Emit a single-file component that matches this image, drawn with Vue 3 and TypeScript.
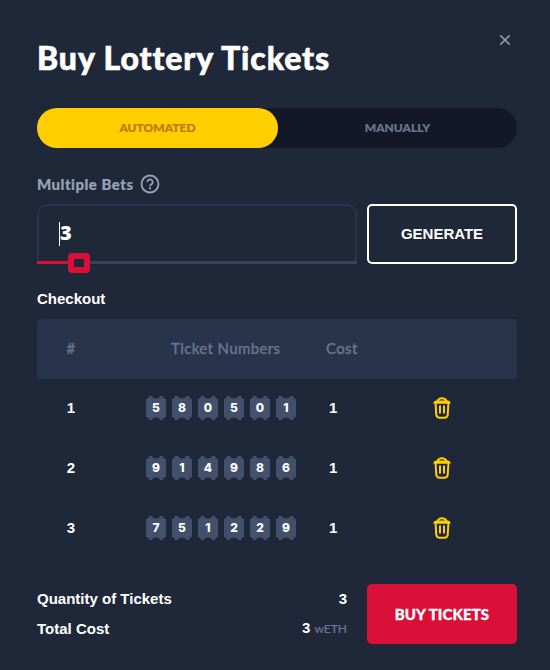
<script setup lang="ts">
import { ref } from 'vue'

interface Ticket {
  id: number
  numbers: number[]
  cost: number
}

const mode = ref<'automated' | 'manually'>('automated')
const bets = ref(3)
const tickets = ref<Ticket[]>([
  { id: 1, numbers: [5, 8, 0, 5, 0, 1], cost: 1 },
  { id: 2, numbers: [9, 1, 4, 9, 8, 6], cost: 1 },
  { id: 3, numbers: [7, 5, 1, 2, 2, 9], cost: 1 },
])
</script>

<template>
  <main class="modal">
    <header class="head">
      <h1 class="title">Buy Lottery Tickets</h1>
      <button class="close" aria-label="Close">
        <svg width="12" height="12" viewBox="0 0 12 12"><path d="M1.300 1.300l9.400 9.400M10.700 1.300l-9.400 9.400" stroke="#8d95a4" stroke-width="1.700" fill="none" /></svg>
      </button>
    </header>

    <div class="tabs">
      <button class="tab" :class="{ active: mode === 'automated' }" @click="mode = 'automated'"><span>AUTOMATED</span></button>
      <button class="tab" :class="{ active: mode === 'manually' }" @click="mode = 'manually'"><span>MANUALLY</span></button>
    </div>

    <div class="label">
      <span class="label-text">Multiple Bets</span>
      <svg width="20" height="20" viewBox="0 0 20 20" fill="none" stroke="#98a2b5">
        <circle cx="10" cy="10" r="8.500" stroke-width="1.800" />
        <path d="M7.400 8.100a2.650 2.650 0 1 1 4.100 2.200c-.95.6-1.500 1-1.500 1.900" stroke-width="1.800" />
        <path d="M9 14.300h2" stroke-width="2" />
      </svg>
    </div>

    <div class="bet-row">
      <div class="field">
        <span class="caret"></span><span class="value">{{ bets }}</span>
        <div class="track"><div class="fill"></div></div>
        <div class="thumb"></div>
      </div>
      <button class="generate"><span>GENERATE</span></button>
    </div>

    <h2 class="checkout">Checkout</h2>

    <section class="table">
      <div class="row thead">
        <span class="c-id">#</span>
        <span class="c-num">Ticket Numbers</span>
        <span class="c-cost">Cost</span>
        <span></span>
      </div>
      <div v-for="t in tickets" :key="t.id" class="row ticket">
        <span class="c-id">{{ t.id }}</span>
        <span class="c-num numbers">
          <span v-for="(n, i) in t.numbers" :key="i" class="stub">
            <svg class="stub-bg" width="20" height="24" viewBox="0 0 20 24"><path d="M3 0H6C6.500 1.700 8 2.500 10 2.500S13.500 1.700 14 0H17C17.300 1.700 18.300 2.700 20 3V21C18.300 21.300 17.300 22.300 17 24H14C13.500 22.300 12 21.500 10 21.500S6.500 22.300 6 24H3C2.700 22.300 1.700 21.300 0 21V3C1.700 2.700 2.700 1.700 3 0Z" fill="#42506b" /></svg>
            <b>{{ n }}</b>
          </span>
        </span>
        <span class="c-cost">{{ t.cost }}</span>
        <button class="trash" aria-label="Delete">
          <svg width="18" height="22" viewBox="0 0 18 22" fill="none" stroke="#ffcf00" stroke-linejoin="round">
            <path d="M4.400 4.300C5.200 2 6.400 1.300 9 1.300S12.800 2 13.600 4.300" stroke-width="1.900" />
            <path d="M1.300 6C1.300 4.800 2.200 4.300 3.700 4.300H14.300C15.800 4.300 16.700 4.800 16.700 6Z" stroke-width="1.700" />
            <path d="M2.600 6L3.200 17.300C3.350 19.700 4.500 20.800 6.700 20.800H11.300C13.500 20.800 14.650 19.700 14.800 17.300L15.400 6" stroke-width="2" />
            <path d="M7 8.500V16.500M11 8.500V16.500" stroke-width="2" />
          </svg>
        </button>
      </div>
    </section>

    <footer class="foot">
      <div class="totals">
        <div class="line"><span>Quantity of Tickets</span><span>{{ tickets.length }}</span></div>
        <div class="line"><span>Total Cost</span><span class="amount">3 <small>wETH</small></span></div>
      </div>
      <button class="buy"><span>BUY TICKETS</span></button>
    </footer>
  </main>
</template>

<style>
body { background: #1f2838; }
</style>

<style scoped>
* { box-sizing: border-box; }
.modal { width: 550px; height: 670px; padding: 28px 33px 0 37px; background: #1f2838; color: #fff; font: 700 15px "Liberation Sans", Arial, sans-serif; overflow: hidden; }
button { border: 0; padding: 0; margin: 0; background: none; font: inherit; color: inherit; display: flex; align-items: center; justify-content: center; }
.head { display: flex; justify-content: space-between; height: 80px; }
.title { margin: 0; font: 900 32px/60px Lato, sans-serif; letter-spacing: 0.9px; -webkit-text-stroke: 0.6px #fff; white-space: nowrap; }
.close { width: 24px; height: 24px; }
.tabs { width: 480px; height: 40px; border-radius: 20px; background: #121827; display: flex; }
.tab { width: 239px; height: 40px; padding-bottom: 2px; border-radius: 20px; color: #6b768d; font: 900 12px Lato, sans-serif; -webkit-text-stroke: 0.2px; }
.tab:first-child { width: 241px; }
.tab.active { background: #ffcf00; color: #c57600; }
.label { display: flex; align-items: center; height: 20px; margin-top: 26px; gap: 6px; color: #98a2b5; font: 900 15px/20px Lato, sans-serif; }
.label-text { width: 97px; letter-spacing: 0.5px; -webkit-text-stroke: 0.2px; white-space: nowrap; }
.bet-row { display: flex; gap: 10px; margin-top: 10px; width: 480px; }
.field { position: relative; width: 320px; height: 60px; border: 2px solid #28344b; border-bottom: 0; border-radius: 10px 10px 0 0; padding: 0 0 2px 20px; display: flex; align-items: center; }
.caret { width: 1px; height: 24px; background: #fff; }
.value { font: 800 20px/24px "Open Sans", sans-serif; padding-bottom: 2px; }
.track { position: absolute; left: -2px; right: -2px; bottom: 0; height: 3px; background: #37435a; }
.fill { width: 31px; height: 3px; background: #da1039; }
.thumb { position: absolute; left: 29px; top: 47px; width: 22px; height: 20px; border: 6px solid #da1039; border-radius: 4px; background: #1f2838; }
.generate { width: 150px; height: 60px; padding-bottom: 2px; border: 2px solid #fff; border-radius: 5px; }
.checkout { margin: 25px 0 0; height: 30px; font: inherit; line-height: 20px; }
.table { width: 480px; }
.row { display: grid; grid-template-columns: 68px 221px 79px 112px; align-items: center; height: 60px; }
.ticket { padding-bottom: 3px; }
.thead { background: #28344b; border-radius: 4px; color: #68758f; font: 500 15px Lato, sans-serif; letter-spacing: 0.35px; -webkit-text-stroke: 0.3px; padding-bottom: 2px; }
.c-id { text-align: center; }
.c-num { padding-left: 41px; white-space: nowrap; }
.thead .c-num { padding-left: 66px; }
.c-cost { padding-left: 3px; }
.thead .c-cost { padding-left: 0; }
.numbers { display: flex; gap: 6px; }
.stub { position: relative; width: 20px; height: 24px; display: flex; align-items: center; justify-content: center; font: 800 12px/24px Inter, sans-serif; }
.stub-bg { position: absolute; inset: 0; }
.stub b { position: relative; font-weight: 800; }
.trash { width: 18px; height: 22px; margin: 1px 0 0 28px; }
.foot { display: flex; gap: 20px; width: 480px; margin-top: 25px; }
.totals { width: 310px; }
.line { display: flex; justify-content: space-between; align-items: center; height: 30px; padding-bottom: 2px; }
.amount { padding-bottom: 1px; }
.line small { color: #68758f; font: 500 12px Lato, sans-serif; -webkit-text-stroke: 0.2px; }
.buy { width: 150px; height: 60px; padding-bottom: 1px; background: #da1039; border-radius: 5px; font: 900 15px Lato, sans-serif; letter-spacing: 0.1px; -webkit-text-stroke: 0.3px; }
</style>
